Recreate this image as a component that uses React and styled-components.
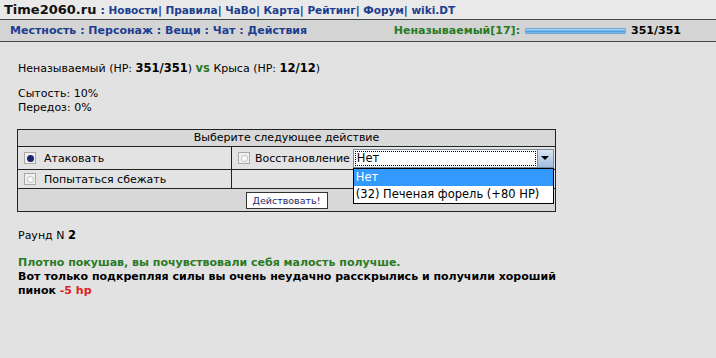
import React from "react";
import styled, { createGlobalStyle } from "styled-components";

const Global = createGlobalStyle`
  html, body {
    margin: 0;
    padding: 0;
    background: #e3e2e3;
    font-family: "DejaVu Sans", Tahoma, sans-serif;
    font-size: 11px;
    color: #000;
  }
`;

const TopBar = styled.div`
  display: flex;
  align-items: baseline;
  height: 20px;
  padding: 2px 4px 0;
  background: #e9e9e9;
  border-bottom: 1px solid #3e4a3e;
  box-sizing: border-box;
`;

const SiteName = styled.span`
  font-weight: bold;
  font-size: 13px;
  color: #111;
  margin-right: 4px;
`;

const Sep = styled.span`
  font-weight: bold;
  color: #1a3a8a;
`;

const Link = styled.a`
  color: #1d3e8f;
  font-weight: bold;
  text-decoration: none;
  font-size: 10.5px;
`;

const NavBar = styled.div`
  display: flex;
  align-items: center;
  height: 22px;
  padding: 0 10px;
  background: #d4d4d4;
  border-bottom: 1px solid #3e4a3e;
  box-sizing: border-box;
`;

const NavLinks = styled.div`
  flex: 1;
  font-weight: bold;
  font-size: 11px;
  color: #1d3e8f;
`;

const Status = styled.div`
  display: flex;
  align-items: center;
  margin-right: 25px;
  font-weight: bold;
  font-size: 11px;
`;

const Name = styled.span`
  color: #2a7a24;
`;

const HpBar = styled.div`
  width: 99px;
  height: 4px;
  margin: 0 5px 0 5px;
  border-radius: 1px;
  background: linear-gradient(#c4e2f8, #4d9fe0 60%, #86c0ec);
  border: 1px solid #6aa8da;
`;

const Content = styled.div`
  padding: 19px 18px 0;
`;

const Line = styled.div`
  line-height: 14px;
  margin-top: ${(p) => p.mt || 0}px;
  font-weight: ${(p) => (p.bold ? "bold" : "normal")};
  color: ${(p) => p.color || "#000"};
`;

const B = styled.b`
  font-weight: bold;
  font-size: 11.5px;
  color: ${(p) => p.color || "inherit"};
`;

const Damage = styled.span`
  color: #e0201c;
`;

const Table = styled.div`
  margin: 14px 0 0 -1px;
  width: 537px;
  border: 1px solid #222;
  background: #d8d8d8;
  display: grid;
  grid-template-columns: 214px 1fr;
`;

const Header = styled.div`
  grid-column: 1 / 3;
  text-align: center;
  height: 16px;
  line-height: 16px;
  border-bottom: 1px solid #222;
`;

const Cell = styled.div`
  display: flex;
  align-items: center;
  height: ${(p) => p.h || 22}px;
  padding-left: 6px;
  background: #e3e3e3;
  border-bottom: 1px solid #222;
  border-right: ${(p) => (p.right ? "1px solid #222" : "none")};
`;

const Radio = styled.span`
  width: 10px;
  height: 10px;
  border: 1px solid #aaa;
  background: #f0f0f0;
  margin-right: ${(p) => p.gap || 8}px;
  display: flex;
  align-items: center;
  justify-content: center;
  flex-shrink: 0;
  &::after {
    content: "";
    width: 7px;
    height: 7px;
    border-radius: 50%;
    background: ${(p) => (p.checked ? "#1e2370" : "#fff")};
    border: ${(p) => (p.checked ? "none" : "1px solid #bbb")};
    box-sizing: border-box;
  }
`;

const Select = styled.div`
  margin-left: 3px;
  width: 201px;
  height: 19px;
  display: flex;
  background: #fff;
  border: 1px solid #7a8a9a;
  box-sizing: border-box;
  position: relative;
`;

const SelectValue = styled.div`
  flex: 1;
  margin: 1px;
  border: 1px dotted #000;
  padding-left: 1px;
  line-height: 13px;
  font-size: 11.5px;
`;

const Arrow = styled.div`
  width: 15px;
  background: linear-gradient(#dbe7f5, #9fbddf);
  border-left: 1px solid #7a8aa0;
  display: flex;
  align-items: center;
  justify-content: center;
  &::after {
    content: "";
    border-left: 4px solid transparent;
    border-right: 4px solid transparent;
    border-top: 4px solid #000;
  }
`;

const Options = styled.div`
  position: absolute;
  top: 18px;
  left: -1px;
  width: 201px;
  background: #fff;
  border: 1px solid #000;
  box-sizing: border-box;
  z-index: 2;
`;

const Option = styled.div`
  height: 17px;
  line-height: 17px;
  padding-left: 2px;
  font-size: 11.5px;
  background: ${(p) => (p.active ? "#3399ff" : "#fff")};
  color: ${(p) => (p.active ? "#fff" : "#000")};
`;

const ButtonRow = styled.div`
  grid-column: 1 / 3;
  display: flex;
  justify-content: center;
  align-items: center;
  height: 22px;
`;

const Button = styled.button`
  font-family: "DejaVu Sans", Tahoma, sans-serif;
  font-size: 9.5px;
  color: #1d2a6e;
  background: #fff;
  border: 1px solid #333;
  height: 17px;
  width: 82px;
  padding: 0;
`;

const links = ["Новости", "Правила", "ЧаВо", "Карта", "Рейтинг", "Форум"];

export default function App() {
  return (
    <>
      <Global />
      <TopBar>
        <SiteName>Time2060.ru</SiteName>
        <Sep>:</Sep>&nbsp;
        {links.map((l) => (
          <React.Fragment key={l}>
            <Link>{l}</Link>
            <Sep>|</Sep>&nbsp;
          </React.Fragment>
        ))}
        <Link>wiki.DT</Link>
      </TopBar>
      <NavBar>
        <NavLinks>Местность : Персонаж : Вещи : Чат : Действия</NavLinks>
        <Status>
          <Name>Неназываемый[17]:</Name>
          <HpBar />
          <span>351/351</span>
        </Status>
      </NavBar>
      <Content>
        <Line>
          Неназываемый (HP: <B>351/351</B>) <B color="#2a7a24">vs</B> Крыса (HP: <B>12/12</B>)
        </Line>
        <Line mt={11}>Сытость: 10%</Line>
        <Line>Передоз: 0%</Line>
        <Table>
          <Header>Выберите следующее действие</Header>
          <Cell right>
            <Radio checked />Атаковать
          </Cell>
          <Cell>
            <Radio gap={5} />Восстановление
            <Select>
              <SelectValue>Нет</SelectValue>
              <Arrow />
              <Options>
                <Option active>Нет</Option>
                <Option>(32) Печеная форель (+80 HP)</Option>
              </Options>
            </Select>
          </Cell>
          <Cell right h={18}>
            <Radio />Попытаться сбежать
          </Cell>
          <Cell h={18} />
          <ButtonRow>
            <Button>Действовать!</Button>
          </ButtonRow>
        </Table>
        <Line mt={16}>
          Раунд N <B>2</B>
        </Line>
        <Line mt={13} bold color="#2a7a24">
          Плотно покушав, вы почувствовали себя малость получше.
        </Line>
        <Line bold>
          Вот только подкрепляя силы вы очень неудачно расскрылись и получили хороший
        </Line>
        <Line bold>
          пинок <Damage>-5 hp</Damage>
        </Line>
      </Content>
    </>
  );
}
